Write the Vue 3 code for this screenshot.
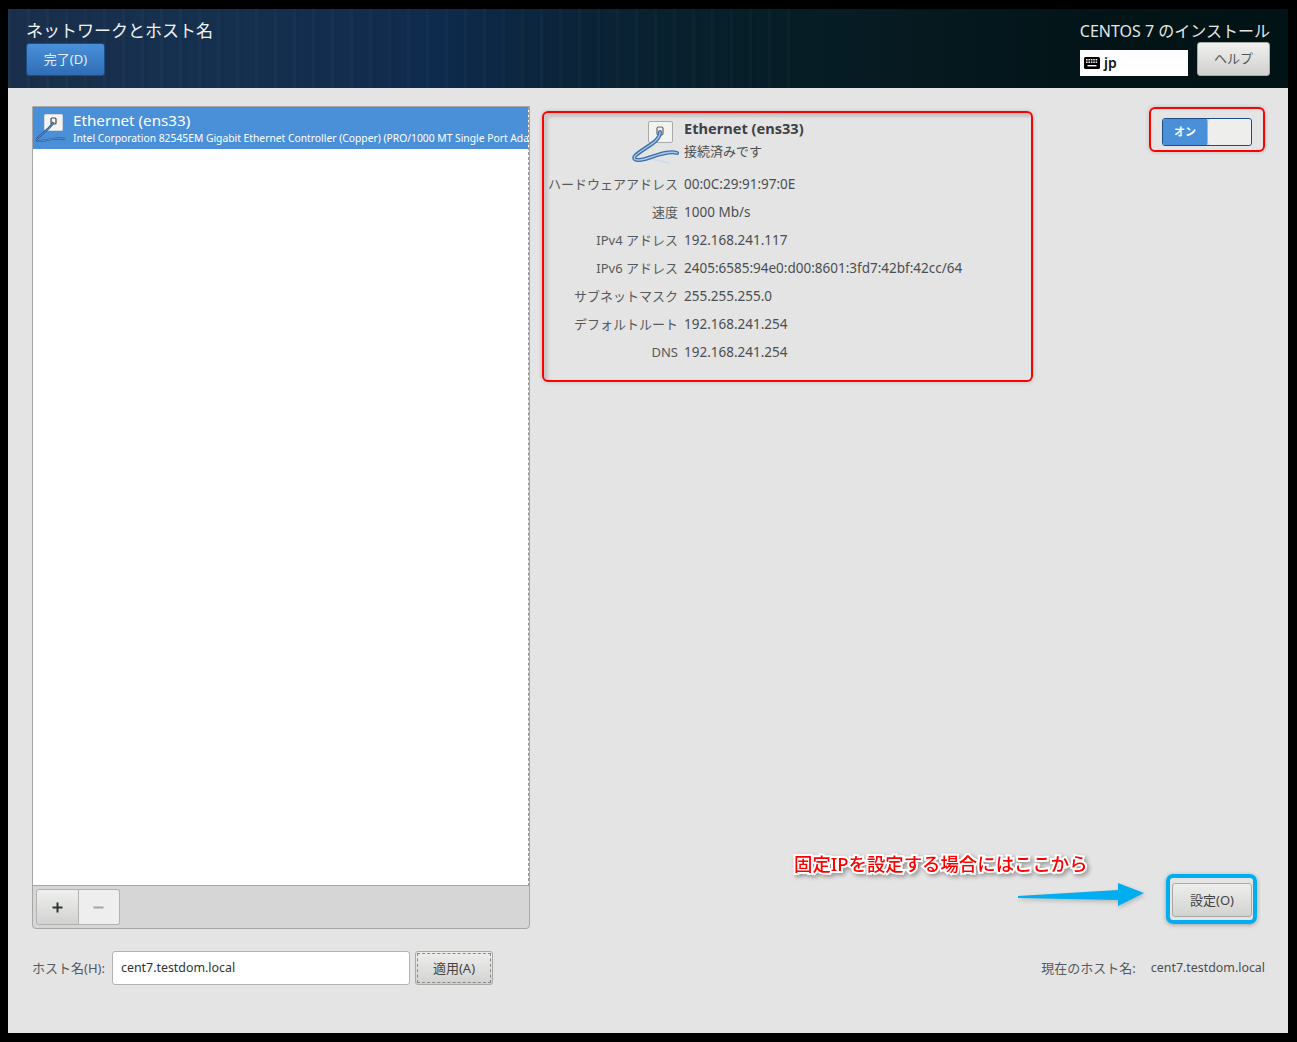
<template>
  <div class="screen">
    <header class="topbar">
      <div class="top-left">
        <h1 class="spoke-title">ネットワークとホスト名</h1>
        <button class="done">完了(D)</button>
      </div>
      <div class="top-right">
        <div class="install-title">CENTOS 7 のインストール</div>
        <div class="top-controls">
          <div class="layout">
            <svg class="kbd" width="16" height="12" viewBox="0 0 16 12">
              <rect x="0" y="0" width="16" height="12" rx="1.5" fill="#000" />
              <g fill="#fff">
                <rect v-for="k in keys" :key="k.x + '-' + k.y" :x="k.x" :y="k.y" :width="k.w" height="1.4" />
              </g>
            </svg>
            <span class="layout-name">jp</span>
          </div>
          <button class="help">ヘルプ</button>
        </div>
      </div>
    </header>

    <main class="content">
      <div class="columns">
        <section class="device-panel">
          <div class="device-list">
            <div class="device-row">
              <svg class="row-icon" width="32" height="32" viewBox="0 0 32 32">
                <rect x="9.5" y="2.5" width="18" height="16" rx="1" fill="#f4f4f2" stroke="#cfd6de" />
                <rect x="16" y="6" width="5" height="6" rx="1" fill="none" stroke="#444" stroke-width="1.2" />
                <path d="M18.5 10 C16 16 7 21 2 27 C0 31 10 28 18 27 C23 26 27 26 30 27.5" fill="none" stroke="#2b5a94" stroke-width="2.2" />
                <path d="M18.5 10 C16 16 7 21 2 27 C0 31 10 28 18 27 C23 26 27 26 30 27.5" fill="none" stroke="#5a9ae0" stroke-width="0.9" />
              </svg>
              <div class="row-text">
                <div class="row-name">Ethernet (ens33)</div>
                <div class="row-desc">Intel Corporation 82545EM Gigabit Ethernet Controller (Copper) (PRO/1000 MT Single Port Adapter)</div>
              </div>
            </div>
          </div>
          <div class="toolbar">
            <div class="tool-group">
              <button class="tool plus">
                <svg width="11" height="11" viewBox="0 0 11 11"><path d="M5.5 0.5v10M0.5 5.5h10" stroke="#2e3436" stroke-width="2" /></svg>
              </button>
              <button class="tool minus">
                <svg width="11" height="11" viewBox="0 0 11 11"><path d="M0.5 5.5h10" stroke="#a3a6a6" stroke-width="2" /></svg>
              </button>
            </div>
          </div>
        </section>

        <section class="detail-side">
          <div class="detail-top">
            <div class="details">
              <div class="detail-head">
                <svg class="big-icon" width="48" height="46" viewBox="0 0 48 46">
                  <rect x="17.5" y="1.5" width="24" height="21" rx="1.5" fill="#f2f2f0" stroke="#a9a9a9" />
                  <rect x="26" y="7" width="6" height="8" rx="1.5" fill="none" stroke="#666" stroke-width="1.2" />
                  <path d="M14 39 C24 38 32 42 38 43" fill="none" stroke="#d3dde8" stroke-width="2" stroke-linecap="round" />
                  <path d="M29 12 C29 22 14 27 5 35 C0 40 6 41 14 39 C24 36 38 30 46 33" fill="none" stroke="#3b6ea8" stroke-width="4" stroke-linecap="round" />
                  <path d="M29 12 C29 22 14 27 5 35 C0 40 6 41 14 39 C24 36 38 30 46 33" fill="none" stroke="#a8c8ea" stroke-width="1.4" stroke-linecap="round" />
                </svg>
                <div class="head-text">
                  <div class="head-name">Ethernet (ens33)</div>
                  <div class="head-status">接続済みです</div>
                </div>
              </div>
              <div v-for="row in rows" :key="row[0]" class="detail-row">
                <div class="detail-label">{{ row[0] }}</div>
                <div class="detail-value">{{ row[1] }}</div>
              </div>
            </div>
            <div class="switch-box">
              <div class="switch">
                <div class="switch-on">オン</div>
                <div class="switch-knob"></div>
              </div>
            </div>
          </div>
          <div class="config-area">
            <div class="hint">
              <div class="hint-text">固定IPを設定する場合にはここから</div>
              <svg class="hint-arrow" width="128" height="28" viewBox="0 0 128 28">
                <path d="M0 16 L100 10 L100 3 L126 13 L100 26 L100 20 L0 18 Z" fill="#00aeef" />
              </svg>
            </div>
            <div class="config-ring">
              <button class="config">設定(O)</button>
            </div>
          </div>
        </section>
      </div>

      <div class="host-row">
        <label class="host-label">ホスト名(H):</label>
        <div class="host-input">cent7.testdom.local</div>
        <button class="apply"><span>適用(A)</span></button>
        <div class="current-host">
          <span>現在のホスト名:</span>
          <span class="current-value">cent7.testdom.local</span>
        </div>
      </div>
    </main>
  </div>
</template>

<script setup>
const rows = [
  ['ハードウェアアドレス', '00:0C:29:91:97:0E'],
  ['速度', '1000 Mb/s'],
  ['IPv4 アドレス', '192.168.241.117'],
  ['IPv6 アドレス', '2405:6585:94e0:d00:8601:3fd7:42bf:42cc/64'],
  ['サブネットマスク', '255.255.255.0'],
  ['デフォルトルート', '192.168.241.254'],
  ['DNS', '192.168.241.254'],
]
const keys = []
for (const y of [2, 4.5]) {
  for (let x = 2; x < 13; x += 2.4) keys.push({ x, y, w: 1.6 })
}
keys.push({ x: 3.5, y: 8, w: 9 })
</script>

<style>
html, body { margin: 0; background: #000; }
</style>

<style scoped>
.screen {
  box-sizing: border-box;
  width: 1297px;
  height: 1042px;
  padding: 9px 9px 9px 8px;
  background: #000;
  display: flex;
  flex-direction: column;
  font-family: "Noto Sans", "Noto Sans CJK JP", sans-serif;
  color: #2e3436;
  font-size: 13px;
}
button { font-family: inherit; margin: 0; padding: 0 0 2px; }
.topbar {
  height: 79px;
  flex: none;
  box-sizing: border-box;
  padding: 12px 18px 0;
  display: flex;
  justify-content: space-between;
  background:
    repeating-linear-gradient(90deg, rgba(255,255,255,0.018) 0 3px, rgba(0,0,0,0.03) 3px 7px, rgba(255,255,255,0) 7px 19px) 0 0 / 62% 100% no-repeat,
    linear-gradient(90deg, #1a2f4b 0, #16304f 12%, #122c4e 30%, #0e2b4e 33%, #0b2337 45%, #07202b 55%, #06191f 72%, #021417 85%, #021315 100%);
}
.spoke-title {
  margin: 0;
  font-size: 17px;
  font-weight: 400;
  line-height: 20px;
  color: #f2f2f2;
}
.done {
  display: block;
  width: 79px;
  height: 33px;
  margin-top: 2px;
  border: 1px solid #1c4d86;
  border-radius: 3px;
  background: linear-gradient(#4a90d9, #2f6db5);
  color: #e4edf6;
  font-size: 13px;
}
.top-right {
  display: flex;
  flex-direction: column;
  align-items: flex-end;
}
.install-title {
  font-size: 16px;
  line-height: 20px;
  color: #e4e6e6;
}
.top-controls {
  display: flex;
  gap: 9px;
  margin-top: 1px;
}
.layout {
  width: 108px;
  height: 26px;
  margin-top: 8px;
  box-sizing: border-box;
  padding-left: 4px;
  background: #fff;
  color: #111;
  display: flex;
  align-items: center;
  gap: 4px;
  font-size: 14px;
  font-weight: 600;
}
.layout-name { margin-top: -2px; }
.help {
  width: 73px;
  height: 34px;
  border: 1px solid #a9a9a7;
  border-radius: 3px;
  background: linear-gradient(#f0f0ee, #d0d0ce);
  color: #555;
  font-size: 13px;
  padding-bottom: 4px;
}
.content {
  flex: 1;
  background: #e4e4e4;
  box-sizing: border-box;
  padding: 18px 23px 0 24px;
  display: flex;
  flex-direction: column;
}
.columns {
  display: flex;
  gap: 12px;
  height: 823px;
}
.device-panel {
  width: 498px;
  flex: none;
  box-sizing: border-box;
  border: 1px solid #a6a6a6;
  border-radius: 0 0 4px 4px;
  display: flex;
  flex-direction: column;
  background: #d6d6d6;
  overflow: hidden;
}
.device-list {
  flex: 1;
  background: #fff;
  border-right: 1px dashed #999;
  border-bottom: 1px solid #a6a6a6;
  min-height: 0;
}
.device-row {
  height: 42px;
  background: #4a90d9;
  color: #fff;
  display: flex;
  align-items: center;
  overflow: hidden;
}
.row-icon { flex: none; margin-left: 2px; }
.row-text { margin-left: 6px; white-space: nowrap; min-width: 0; }
.row-name { font-size: 15.2px; line-height: 20px; }
.row-desc { font-size: 10.3px; line-height: 16px; }
.toolbar {
  height: 42px;
  flex: none;
  box-sizing: border-box;
  padding: 3px;
}
.tool-group {
  display: flex;
  width: 84px;
  height: 36px;
}
.tool {
  flex: 1;
  border: 1px solid #b2b2b2;
  display: flex;
  align-items: center;
  justify-content: center;
  padding: 0;
}
.plus {
  border-radius: 3px 0 0 3px;
  background: linear-gradient(#efefed, #d2d2d0);
}
.minus {
  border-left: 0;
  border-radius: 0 3px 3px 0;
  background: #eeeeee;
}
.detail-side {
  flex: 1;
  display: flex;
  flex-direction: column;
  justify-content: space-between;
}
.detail-top {
  display: flex;
  justify-content: space-between;
  align-items: flex-start;
}
.details {
  width: 491px;
  height: 271px;
  margin-top: 5px;
  box-sizing: border-box;
  border: 2px solid #f00;
  border-radius: 6px;
  box-shadow: 0 0 4px rgba(0,0,0,0.18), inset 4px 4px 3px rgba(0,0,0,0.13);
}
.detail-head {
  display: flex;
  height: 57px;
  padding-top: 5px;
  box-sizing: border-box;
}
.big-icon { margin-left: 87px; flex: none; margin-top: 2px; }
.head-text { margin-left: 5px; }
.head-name { font-size: 14.6px; font-weight: 700; line-height: 20px; color: #3c4144; }
.head-status { font-size: 13px; line-height: 20px; margin-top: 3px; color: #4a4f51; }
.detail-row {
  display: flex;
  height: 28px;
  align-items: center;
  gap: 6px;
}
.detail-label {
  width: 134px;
  flex: none;
  text-align: right;
  color: #555a5c;
  white-space: nowrap;
  margin-top: -1px;
}
.detail-value {
  font-size: 13.5px;
  color: #4a4f51;
  white-space: nowrap;
}
.switch-box {
  width: 116px;
  height: 45px;
  margin-top: 1px;
  box-sizing: border-box;
  border: 2px solid #f00;
  border-radius: 6px;
  padding: 9px 0 0 11px;
  box-shadow: 0 0 4px rgba(0,0,0,0.18);
}
.switch {
  width: 90px;
  height: 28px;
  box-sizing: border-box;
  border: 1px solid #1c4d86;
  border-radius: 3px;
  display: flex;
  overflow: hidden;
}
.switch-on {
  width: 44px;
  background: #4a90d9;
  color: #fff;
  font-size: 11px;
  font-weight: 700;
  text-align: center;
  line-height: 26px;
}
.switch-knob {
  flex: 1;
  background: #eeeeec;
  border-left: 1px solid #a9b5c2;
  border-radius: 3px;
}
.config-area {
  position: relative;
  display: flex;
  justify-content: flex-end;
  margin: 0 8px 5px 0;
}
.config-ring {
  width: 91px;
  height: 50px;
  box-sizing: border-box;
  border: 4px solid #00aeef;
  border-radius: 7px;
  padding: 5px 0 0 2px;
  box-shadow: 0 1px 4px rgba(0,0,0,0.3);
}
.config {
  display: block;
  width: 80px;
  height: 34px;
  border: 1px solid #a9a9a7;
  border-radius: 3px;
  background: linear-gradient(#eeeeec, #d2d2d0);
  color: #444;
  font-size: 13px;
}
.hint {
  position: absolute;
  left: 252px;
  top: -23px;
}
.hint-text {
  font-size: 18.4px;
  font-weight: 500;
  line-height: 26px;
  white-space: nowrap;
  color: #f00;
  -webkit-text-stroke: 4px #fff;
  paint-order: stroke fill;
  filter: drop-shadow(2px 2px 2px rgba(0,0,0,0.35));
}
.hint-arrow {
  position: absolute;
  left: 224px;
  top: 29px;
  filter: drop-shadow(1px 2px 2px rgba(0,0,0,0.2));
}
.host-row {
  display: flex;
  align-items: center;
  margin-top: 22px;
  height: 34px;
}
.host-label { width: 80px; flex: none; color: #555a5c; white-space: nowrap; margin-top: -2px; }
.host-input {
  width: 298px;
  height: 34px;
  box-sizing: border-box;
  border: 1px solid #b2b2b2;
  border-radius: 3px;
  background: #fff;
  padding-left: 8px;
  font-size: 12.4px;
  line-height: 31px;
  color: #2e3436;
}
.apply {
  width: 78px;
  height: 34px;
  margin-left: 5px;
  border: 1px solid #a9a9a7;
  border-radius: 3px;
  background: linear-gradient(#eeeeec, #d2d2d0);
  color: #444;
  font-size: 13px;
  padding: 1px;
}
.apply span {
  display: flex;
  align-items: center;
  justify-content: center;
  height: 100%;
  box-sizing: border-box;
  border: 1px dashed #888;
  padding-bottom: 2px;
}
.current-host {
  margin-left: auto;
  color: #555a5c;
  display: flex;
  align-items: center;
  gap: 15px;
  margin-top: -2px;
}
.current-value { color: #4a4f51; font-size: 12.4px; }
</style>
